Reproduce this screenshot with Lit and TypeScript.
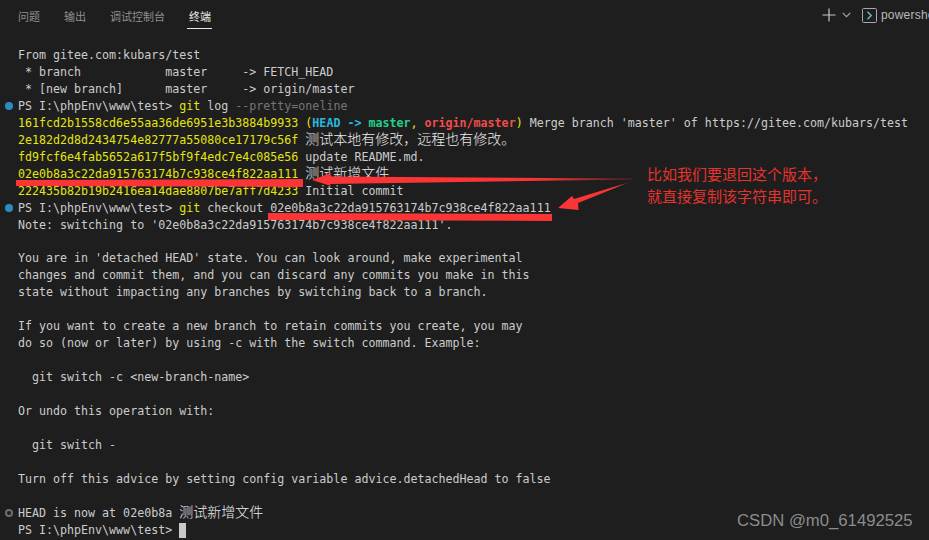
import { LitElement, html, css, nothing } from "lit";
import { customElement } from "lit/decorators.js";

type Seg = [string, string?];
type Line = { dot?: "blue" | "gray"; segs: Seg[]; cursor?: boolean };

const t = (s: string): Line => ({ segs: [[s]] });
const LINES: Line[] = [
  t("From gitee.com:kubars/test"),
  t(" * branch            master     -> FETCH_HEAD"),
  t(" * [new branch]      master     -> origin/master"),
  { dot: "blue", segs: [["PS I:\\phpEnv\\www\\test> "], ["git", "y"], [" log "], ["--pretty=oneline", "dim"]] },
  { segs: [["161fcd2b1558cd6e55aa36de6951e3b3884b9933 ", "y"], ["(", "y"], ["HEAD -> ", "c"], ["master", "g"], [", ", "y"], ["origin/master", "r"], [")", "y"], [" Merge branch 'master' of https://gitee.com/kubars/test"]] },
  { segs: [["2e182d2d8d2434754e82777a55080ce17179c56f ", "y"], ["测试本地有修改，远程也有修改。", "cjk"]] },
  { segs: [["fd9fcf6e4fab5652a617f5bf9f4edc7e4c085e56 ", "y"], ["update README.md."]] },
  { segs: [["02e0b8a3c22da915763174b7c938ce4f822aa111 ", "y"], ["测试新增文件", "cjk"]] },
  { segs: [["222435b82b19b2416ea14dae8807be7aff7d4233 ", "y"], ["Initial commit"]] },
  { dot: "blue", segs: [["PS I:\\phpEnv\\www\\test> "], ["git", "y"], [" checkout 02e0b8a3c22da915763174b7c938ce4f822aa111"]] },
  t("Note: switching to '02e0b8a3c22da915763174b7c938ce4f822aa111'."),
  t(""),
  t("You are in 'detached HEAD' state. You can look around, make experimental"),
  t("changes and commit them, and you can discard any commits you make in this"),
  t("state without impacting any branches by switching back to a branch."),
  t(""),
  t("If you want to create a new branch to retain commits you create, you may"),
  t("do so (now or later) by using -c with the switch command. Example:"),
  t(""),
  t("  git switch -c <new-branch-name>"),
  t(""),
  t("Or undo this operation with:"),
  t(""),
  t("  git switch -"),
  t(""),
  t("Turn off this advice by setting config variable advice.detachedHead to false"),
  t(""),
  { dot: "gray", segs: [["HEAD is now at 02e0b8a "], ["测试新增文件", "cjk"]] },
  { segs: [["PS I:\\phpEnv\\www\\test> "]], cursor: true },
];

@customElement("app-root")
export class AppRoot extends LitElement {
  static styles = css`
    :host {
      display: block;
      width: 100%;
      height: 540px;
      background: #1e1e1e;
      overflow: hidden;
      position: relative;
      color: #cccccc;
    }
    .header {
      display: flex;
      align-items: flex-start;
      justify-content: space-between;
      height: 47px;
      box-sizing: border-box;
      font-family: "Noto Sans CJK SC", "Liberation Sans", sans-serif;
    }
    .tabs {
      display: flex;
      gap: 24px;
      padding-left: 18px;
    }
    .tab {
      font-size: 11px;
      line-height: 16px;
      padding-top: 8px;
      height: 29px;
      box-sizing: border-box;
      color: #8f8f8f;
      position: relative;
    }
    .tab.active {
      color: #e7e7e7;
    }
    .tab.active::after {
      content: "";
      position: absolute;
      left: -2px;
      right: -1px;
      bottom: 0;
      height: 1px;
      background: #e7e7e7;
    }
    .actions {
      display: flex;
      align-items: center;
      height: 30px;
      width: 107px;
      flex: none;
      overflow: hidden;
      white-space: nowrap;
    }
    .actions svg {
      display: block;
      flex: none;
    }
    .plus { margin-right: 6px; }
    .chev { margin-right: 11px; }
    .box { margin-right: 4px; }
    .shell {
      font-family: "Liberation Sans", sans-serif;
      font-size: 12px;
      color: #b9b9b9;
      letter-spacing: 0.2px;
    }
    .term {
      font-family: "DejaVu Sans Mono", monospace;
      font-size: 11.65px;
      line-height: 16.96px;
    }
    .line {
      display: flex;
      height: 16.96px;
    }
    .text {
      white-space: pre;
    }
    .gutter {
      width: 18px;
      flex: none;
      display: flex;
      align-items: center;
      padding-left: 5px;
      box-sizing: border-box;
    }
    .dot {
      width: 8px;
      height: 8px;
      border-radius: 50%;
      box-sizing: border-box;
    }
    .dot.blue { background: #2b8cc4; }
    .dot.gray { border: 2px solid #6e6e6e; }
    .y { color: #e5e510; }
    .dim { color: #767676; }
    .c { color: #29b8db; font-weight: bold; }
    .g { color: #23d18b; font-weight: bold; }
    .r { color: #f14c4c; font-weight: bold; }
    .cjk {
      font-family: "Noto Sans CJK SC", sans-serif;
      font-size: 14px;
      font-weight: 300;
      line-height: 0;
      color: #ededed;
    }
    .cursor {
      display: inline-block;
      width: 7px;
      height: 15px;
      background: #c8c8c8;
      vertical-align: top;
      margin-top: 1px;
    }
    .marks {
      position: absolute;
      inset: 0;
      pointer-events: none;
    }
    .note {
      position: absolute;
      left: 647px;
      top: 163px;
      font-family: "Noto Sans CJK SC", sans-serif;
      font-size: 15px;
      line-height: 22px;
      color: #e5332e;
      white-space: nowrap;
    }
    .wm {
      position: absolute;
      left: 737px;
      top: 512px;
      font-family: "Liberation Sans", sans-serif;
      font-size: 16.7px;
      line-height: 18px;
      color: #8c8c8c;
      white-space: nowrap;
    }
  `;

  render() {
    return html`
      <div class="header">
        <div class="tabs">
          <div class="tab">问题</div>
          <div class="tab">输出</div>
          <div class="tab">调试控制台</div>
          <div class="tab active">终端</div>
        </div>
        <div class="actions">
          <svg class="plus" width="14" height="14" viewBox="0 0 14 14" fill="none" stroke="#c5c5c5" stroke-width="1.2"><path d="M7 0.5V13.5M0.5 7H13.5"/></svg>
          <svg class="chev" width="9" height="6" viewBox="0 0 9 6" fill="none" stroke="#a8a8a8" stroke-width="1.1"><path d="M0.7 0.8L4.5 4.6L8.3 0.8"/></svg>
          <svg class="box" width="15" height="15" viewBox="0 0 15 15" fill="none"><rect x="0.5" y="0.5" width="14" height="14" rx="1" stroke="#a8a8a8"/><path d="M5.5 3.8L9.2 7.5L5.5 11.2" stroke="#6fb3dc" stroke-width="1.4"/></svg>
          <span class="shell">powershell</span>
        </div>
      </div>
      <div class="term">
        ${LINES.map(
          (l) => html`<div class="line"><div class="gutter">${l.dot ? html`<div class="dot ${l.dot}"></div>` : nothing}</div><div class="text">${l.segs.map(
            ([s, c]) => html`<span class=${c ?? ""}>${s}</span>`
          )}${l.cursor ? html`<span class="cursor"></span>` : nothing}</div></div>`
        )}
      </div>
      <svg class="marks" width="929" height="540" viewBox="0 0 929 540">
        <defs>
          <linearGradient id="fade1" gradientUnits="userSpaceOnUse" x1="311" y1="0" x2="632" y2="0">
            <stop offset="0" stop-color="#fb3535"/>
            <stop offset="0.7" stop-color="#fb3535"/>
            <stop offset="1" stop-color="#5a2222"/>
          </linearGradient>
          <linearGradient id="fade2" gradientUnits="userSpaceOnUse" x1="558" y1="0" x2="630" y2="0">
            <stop offset="0" stop-color="#fb3535"/>
            <stop offset="0.8" stop-color="#fb3535"/>
            <stop offset="1" stop-color="#7a2525"/>
          </linearGradient>
        </defs>
        <path d="M16 180L303 179L303 187L16 186Z" fill="#fb3535"/>
        <path d="M268 213L552 214L552 221L268 220Z" fill="#fb3535"/>
        <path d="M312 180L331 173L330 176.5L632 178.500L632 179.500L330 184L331 186Z" fill="url(#fade1)"/>
        <path d="M558 208L572 196L574 199L630 182L578 203L578.500 210Z" fill="url(#fade2)"/>
      </svg>
      <div class="note">比如我们要退回这个版本，<br />就直接复制该字符串即可。</div>
      <div class="wm">CSDN @m0_61492525</div>
    `;
  }
}
